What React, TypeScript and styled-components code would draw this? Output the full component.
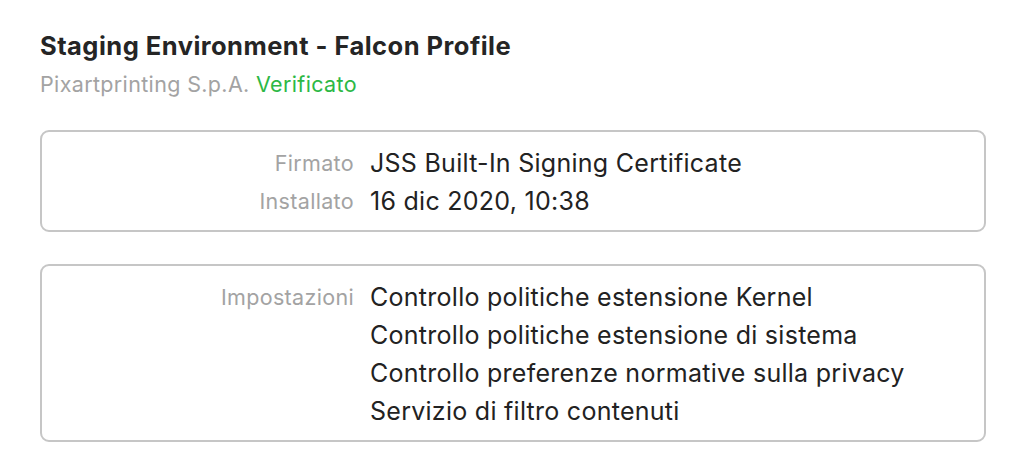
import React from "react";
import styled, { createGlobalStyle } from "styled-components";

const Global = createGlobalStyle`
  html, body { margin: 0; padding: 0; background: #ffffff; }
  body { font-family: Inter, "Liberation Sans", sans-serif; -webkit-font-smoothing: antialiased; }
`;

const Page = styled.div`
  padding: 32px 40px 0 40px;
  width: 946px;
  display: flex;
  flex-direction: column;
`;

const Title = styled.div`
  font-size: 25.5px;
  font-weight: 700;
  color: #252525;
  line-height: 28px;
  letter-spacing: 0.47px;
`;

const Subtitle = styled.div`
  font-size: 21.5px;
  color: #a3a3a3;
  line-height: 26px;
  margin-top: 11px;
  letter-spacing: 0.35px;
`;

const Verified = styled.span`
  color: #2cb845;
`;

const Card = styled.div<{ $top: number; $bottom: number }>`
  margin-top: ${(p) => p.$top}px;
  border: 2px solid #c6c6c6;
  border-radius: 9px;
  padding: 13px 0 ${(p) => p.$bottom}px 0;
  display: grid;
  grid-template-columns: 312px 1fr;
  column-gap: 16px;
  row-gap: 0;
`;

const Label = styled.div`
  text-align: right;
  font-size: 21.5px;
  color: #a3a3a3;
  line-height: 37.7px;
  letter-spacing: 0.33px;
`;

const Values = styled.div`
  display: flex;
  flex-direction: column;
`;

const Value = styled.div`
  font-size: 25px;
  color: #222;
  line-height: 37.7px;
  letter-spacing: 0.27px;
`;

export default function App() {
  return (
    <>
      <Global />
      <Page>
        <Title>Staging Environment - Falcon Profile</Title>
        <Subtitle>
          Pixartprinting S.p.A. <Verified>Verificato</Verified>
        </Subtitle>
        <Card $top={33} $bottom={10}>
          <Label>Firmato</Label>
          <Value>JSS Built-In Signing Certificate</Value>
          <Label>Installato</Label>
          <Value>16 dic 2020, 10:38</Value>
        </Card>
        <Card $top={32} $bottom={10}>
          <Label>Impostazioni</Label>
          <Values>
            <Value>Controllo politiche estensione Kernel</Value>
            <Value>Controllo politiche estensione di sistema</Value>
            <Value>Controllo preferenze normative sulla privacy</Value>
            <Value>Servizio di filtro contenuti</Value>
          </Values>
        </Card>
      </Page>
    </>
  );
}
